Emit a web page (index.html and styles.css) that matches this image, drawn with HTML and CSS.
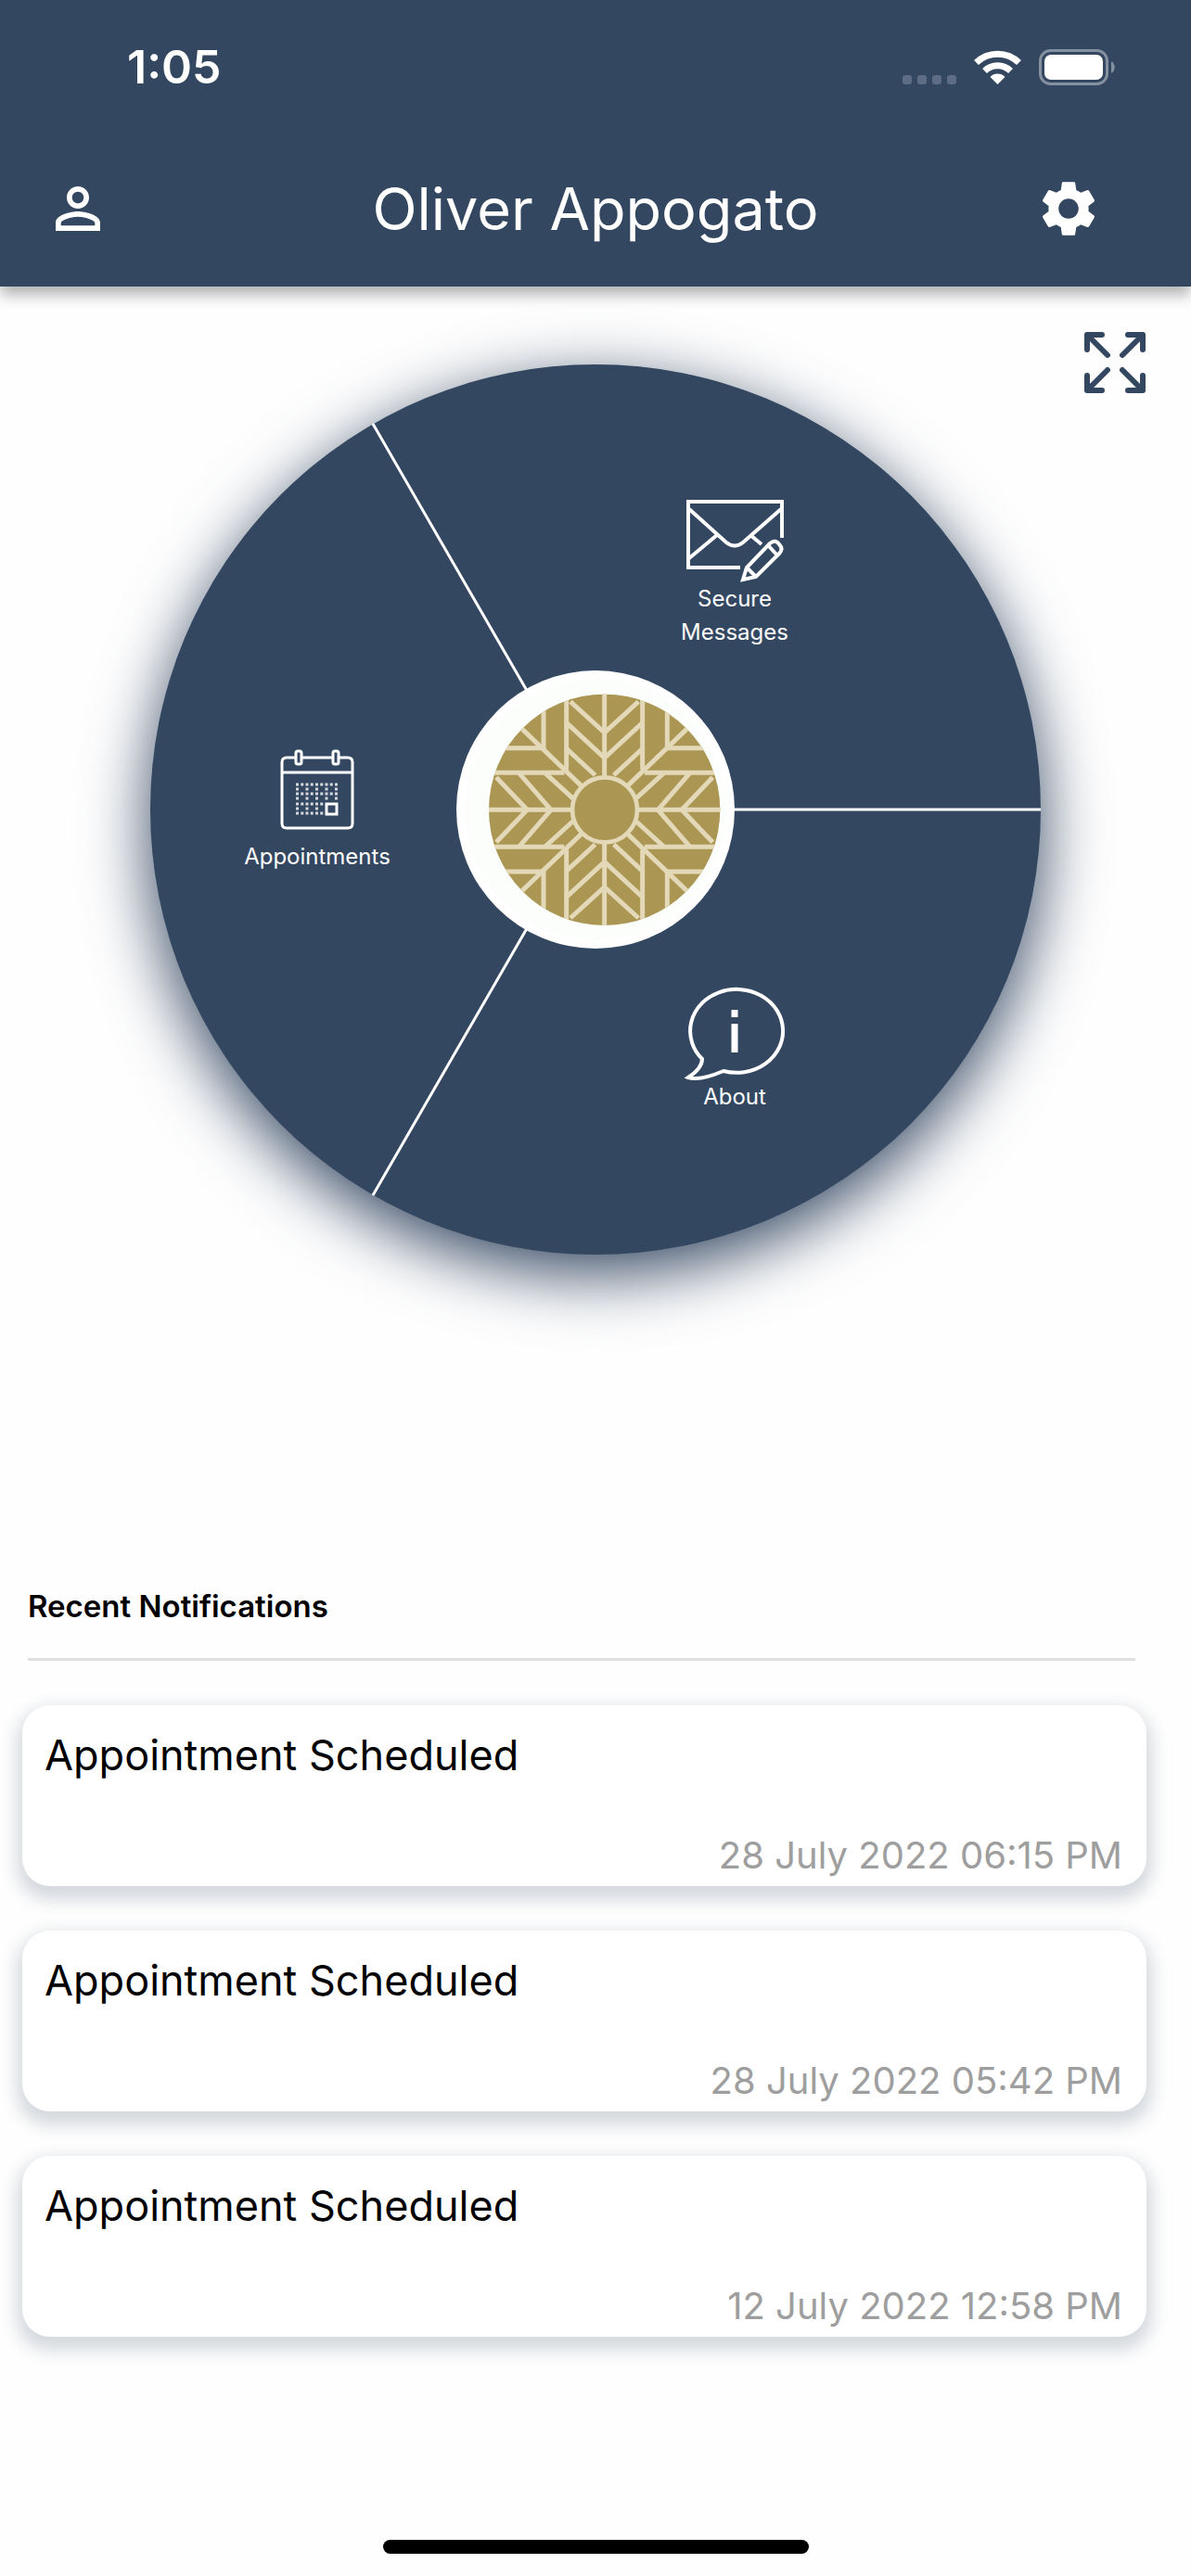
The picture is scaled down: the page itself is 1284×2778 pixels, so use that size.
FILE: index.html
```html
<!DOCTYPE html>
<html lang="en">
<head>
  <meta charset="utf-8">
  <meta name="viewport" content="width=device-width, initial-scale=1.0">
  <title>Oliver Appogato</title>
  <link rel="stylesheet" href="styles.css">
</head>
<body>
  <header class="header">
    <div class="status-bar">
      <span class="time">1:05</span>
      <svg class="status-icons" viewBox="0 0 230 40" aria-hidden="true">
        <g fill="#5e6d83">
          <rect x="1" y="29" width="10" height="10" rx="3"/>
          <rect x="17" y="29" width="10" height="10" rx="3"/>
          <rect x="33" y="29" width="10" height="10" rx="3"/>
          <rect x="49" y="29" width="10" height="10" rx="3"/>
        </g>
        <g fill="none" stroke="#fff" stroke-width="7">
          <path d="M80.5 15.5A33 33 0 0 1 126.5 15.5"/>
          <path d="M89.5 24.5A20 20 0 0 1 117.5 24.5"/>
        </g>
        <path fill="#fff" d="M103.5 39l-8-8a11 11 0 0 1 16 0z"/>
        <rect x="149.5" y="2.5" width="72" height="36" rx="11" fill="none" stroke="#8590a0" stroke-width="3"/>
        <rect x="154" y="7" width="63" height="27" rx="7" fill="#fff"/>
        <path fill="#8590a0" d="M226 14c5 3 5 10 0 13z"/>
      </svg>
    </div>
    <div class="toolbar">
      <button class="icon-button" aria-label="Profile">
        <svg viewBox="0 0 24 24"><path fill="currentColor" d="M12 5.9c1.16 0 2.1.94 2.1 2.1s-.94 2.1-2.1 2.1S9.9 9.16 9.9 8s.94-2.1 2.1-2.1m0 9c2.97 0 6.1 1.46 6.1 2.1v1.1H5.9V17c0-.64 3.13-2.1 6.1-2.1M12 4C9.79 4 8 5.79 8 8s1.79 4 4 4 4-1.79 4-4-1.79-4-4-4zm0 9c-2.67 0-8 1.34-8 4v3h16v-3c0-2.66-5.33-4-8-4z"/></svg>
      </button>
      <h1>Oliver Appogato</h1>
      <button class="icon-button settings" aria-label="Settings">
        <svg viewBox="0 0 24 24"><path fill="currentColor" d="M19.14 12.94c.04-.3.06-.61.06-.94 0-.32-.02-.64-.07-.94l2.03-1.58c.18-.14.23-.41.12-.61l-1.92-3.32c-.12-.22-.37-.29-.59-.22l-2.39.96c-.5-.38-1.03-.7-1.62-.94l-.36-2.54c-.04-.24-.24-.41-.48-.41h-3.84c-.24 0-.43.17-.47.41l-.36 2.54c-.59.24-1.13.57-1.62.94l-2.39-.96c-.22-.08-.47 0-.59.22L2.74 8.87c-.12.21-.08.47.12.61l2.03 1.58c-.05.3-.09.63-.09.94s.02.64.07.94l-2.03 1.58c-.18.14-.23.41-.12.61l1.92 3.32c.12.22.37.29.59.22l2.39-.96c.5.38 1.03.7 1.62.94l.36 2.54c.05.24.24.41.48.41h3.84c.24 0 .44-.17.47-.41l.36-2.54c.59-.24 1.13-.56 1.62-.94l2.39.96c.22.08.47 0 .59-.22l1.92-3.32c.12-.22.07-.47-.12-.61l-2.01-1.58zM12 15.6c-1.98 0-3.6-1.62-3.6-3.6s1.62-3.6 3.6-3.6 3.6 1.62 3.6 3.6-1.62 3.6-3.6 3.6z"/></svg>
      </button>
    </div>
  </header>

  <main>
    <section class="menu">
      <button class="expand" aria-label="Full screen">
        <svg viewBox="0 0 66 66" fill="none" stroke="currentColor" stroke-width="6" stroke-linecap="round" stroke-linejoin="round">
          <path d="M3 19V3H19M3 3L25 25"/>
          <path d="M47 3H63V19M63 3L41 25"/>
          <path d="M3 47V63H19M3 63L25 41"/>
          <path d="M63 47V63H47M63 63L41 41"/>
        </svg>
      </button>

      <nav class="wheel">
        <svg class="wheel-art" viewBox="0 0 960 960" aria-hidden="true">
          <path d="M480 480H960M480 480L240 64M480 480L240 896" stroke="#fff" stroke-width="3"/>
          <circle cx="480" cy="480" r="150" fill="#fff"/>
          <circle cx="480" cy="480" r="141" fill="#fbfefb"/>
          <svg x="318" y="317" width="330" height="330" viewBox="0 0 990 990">
            <defs>
              <clipPath id="disc"><circle cx="515" cy="490" r="374"/></clipPath>
              <g id="half">
                <path d="M515 110V390M392 130V360M638 130V360M318 150V290H190M718 150V290H850"/>
                <path d="M140 370H385M645 370H890"/>
                <path d="M240 220L440 412M790 220L590 412"/>
                <path d="M405 140L515 240L625 140M392 208L515 322L638 208"/>
                <path d="M392 292L485 378M638 292L545 378"/>
                <path d="M165 385L265 490M238 370L342 490M322 370L415 455"/>
                <path d="M865 385L765 490M792 370L688 490M708 370L615 455"/>
              </g>
            </defs>
            <g clip-path="url(#disc)">
              <rect x="130" y="110" width="780" height="770" fill="#ab9653"/>
              <g fill="none" stroke="#e3d9b8" stroke-width="15">
                <use href="#half"/>
                <use href="#half" transform="translate(0 980) scale(1 -1)"/>
                <path d="M130 490H900"/>
              </g>
              <circle cx="516" cy="490" r="105" fill="#ab9653" stroke="#e3d9b8" stroke-width="14"/>
            </g>
          </svg>
        </svg>

        <a class="wheel-item messages" href="#messages">
          <svg width="105" height="91" viewBox="1 0 105 91">
            <path d="M59 75H3V4H104V43"/>
            <path d="M4 12L44 48Q53 55 62 48L103 12M34 40L4 65M70 40L82 50"/>
            <path d="M62 88L66 75L91 49Q97 44 101 50Q106 55 101 60L76 85ZM66 75L76 85M89 51L99 62"/>
          </svg>
          Secure<br>Messages
        </a>

        <a class="wheel-item appointments" href="#appointments">
          <svg class="thin" width="105" height="97" viewBox="1 0 105 97">
            <path d="M37 8H69M77 8H86Q91 8 91 13V79Q91 84 86 84H20Q15 84 15 79V13Q15 8 20 8H29M15 24H91"/>
            <rect x="30" y="1" width="6" height="14" rx="2"/>
            <rect x="70" y="1" width="6" height="14" rx="2"/>
            <g class="dots" stroke-dasharray="3 2.25">
              <path d="M30 37H76M30 47H76M30 58H60M30 68H60"/>
            </g>
            <g class="dots" stroke-dasharray="3 7.5">
              <path d="M30 42H76M30 52H76M30 63H55"/>
            </g>
            <rect x="63" y="58" width="11" height="11"/>
          </svg>
          Appointments
        </a>

        <a class="wheel-item about" href="#about">
          <svg width="105" height="101" viewBox="1 0 105 101">
            <path d="M18 78A50 45 0 1 1 41 91Q15 102 3 98Q18 88 18 78Z"/>
            <path d="M53 25V33M53 40V71" stroke-width="7"/>
          </svg>
          About
        </a>
      </nav>
    </section>

    <section class="notifications">
      <h2>Recent Notifications</h2>
      <hr>
      <ul>
        <li class="card">
          <p class="card-title">Appointment Scheduled</p>
          <time datetime="2022-07-28T18:15">28 July 2022 06:15 PM</time>
        </li>
        <li class="card">
          <p class="card-title">Appointment Scheduled</p>
          <time datetime="2022-07-28T17:42">28 July 2022 05:42 PM</time>
        </li>
        <li class="card">
          <p class="card-title">Appointment Scheduled</p>
          <time datetime="2022-07-12T12:58">12 July 2022 12:58 PM</time>
        </li>
      </ul>
    </section>
  </main>

  <div class="home-indicator"></div>
</body>
</html>
```
FILE: styles.css
```css
* {
  box-sizing: border-box;
}

body {
  margin: 0;
  min-height: 100vh;
  display: flex;
  flex-direction: column;
  background-color: #fefefe;
  color: #000;
  font-family: Inter, "Open Sans", sans-serif;
}

h1, h2, p, ul {
  margin: 0;
  padding: 0;
  font-weight: 400;
}

button {
  padding: 0;
  border: none;
  background: none;
  color: inherit;
  cursor: pointer;
}

svg {
  display: block;
}

.header {
  padding-bottom: 3px;
  background-color: #344761;
  color: #fff;
  box-shadow: 0 9px 15px rgba(0, 0, 0, 0.3);
}

.status-bar {
  display: flex;
  align-items: center;
  justify-content: space-between;
  height: 144px;
  padding: 0 82px 0 137px;
}

.time {
  font-size: 50px;
  font-weight: 600;
}

.status-icons {
  width: 230px;
  height: 40px;
}

.toolbar {
  display: grid;
  grid-template-columns: 1fr auto 1fr;
  align-items: center;
  height: 162px;
  padding: 0 48px;
}

.toolbar h1 {
  font-size: 63px;
}

.icon-button {
  width: 72px;
  height: 72px;
}

.settings {
  justify-self: end;
  margin-right: 48px;
}

.menu {
  position: relative;
  padding: 84px 0 355px;
}

.expand {
  position: absolute;
  top: 49px;
  right: 49px;
  width: 66px;
  height: 66px;
  color: #344761;
}

.wheel {
  position: relative;
  width: 960px;
  max-width: 100%;
  aspect-ratio: 1;
  margin: 0 auto;
  border-radius: 50%;
  background-color: #344761;
  box-shadow: 0 20px 70px #344761;
}

.wheel-item {
  position: absolute;
  display: flex;
  flex-direction: column;
  align-items: center;
  width: 240px;
  margin-left: -120px;
  color: #fff;
  font-size: 24px;
  line-height: 36px;
  text-align: center;
  text-decoration: none;
}

.wheel-item svg {
  overflow: visible;
  fill: none;
  stroke: #fff;
  stroke-width: 4;
}

.wheel-item .thin {
  stroke-width: 3;
}

.dots {
  opacity: 0.8;
}

.messages {
  left: 630px;
  top: 144px;
}

.appointments {
  left: 180px;
  top: 416px;
}

.about {
  left: 630px;
  top: 671px;
}

.notifications h2 {
  padding: 0 30px;
  font-size: 33px;
  font-weight: 600;
  line-height: 48px;
}

.notifications hr {
  height: 3px;
  margin: 32px 60px 48px 30px;
  border: none;
  background-color: #e0e0e0;
}

.notifications ul {
  display: flex;
  flex-direction: column;
  gap: 48px;
  padding: 0 48px 0 24px;
  list-style: none;
}

.card {
  display: flex;
  flex-direction: column;
  justify-content: space-between;
  min-height: 195px;
  padding: 30px 26px 9px 24px;
  border-radius: 30px;
  background-color: #fff;
  box-shadow: 0 9px 18px 6px rgba(52, 71, 97, 0.2);
  line-height: 48px;
}

.card-title {
  font-size: 45px;
}

.card time {
  align-self: flex-end;
  color: #9e9e9e;
  font-size: 40px;
}

.home-indicator {
  width: 459px;
  height: 15px;
  margin: auto auto 24px;
  border-radius: 8px;
  background-color: #000;
}
```
